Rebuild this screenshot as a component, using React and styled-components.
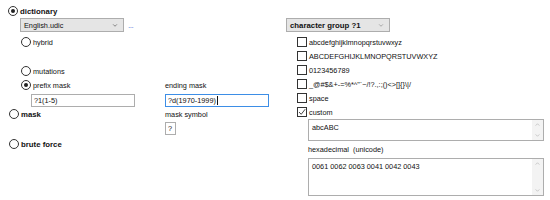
import React from 'react';
import styled, { createGlobalStyle } from 'styled-components';

const GlobalStyle = createGlobalStyle`
  html, body {
    margin: 0;
    padding: 0;
    background: #ffffff;
  }
  body {
    font-family: 'Liberation Sans', Arial, sans-serif;
    font-size: 7.3px;
    color: #111;
  }
`;

const Page = styled.div`
  display: flex;
  width: 550px;
  height: 200px;
  overflow: hidden;
`;

const LeftPane = styled.div`
  width: 279px;
  padding: 5px 0 0 8px;
  box-sizing: border-box;
  display: flex;
  flex-direction: column;
`;

const RightPane = styled.div`
  width: 271px;
  padding: 18px 0 0 7px;
  box-sizing: border-box;
  display: flex;
  flex-direction: column;
`;

const OptionRow = styled.label`
  display: flex;
  align-items: center;
  gap: 2px;
  height: 12px;
  margin-top: ${p => p.$top || 0}px;
  margin-left: ${p => p.$indent || 0}px;
  font-weight: ${p => (p.$bold ? 700 : 400)};
  font-size: ${p => (p.$bold ? '7.8px' : '7.3px')};
  white-space: nowrap;
`;

const RadioMark = styled.span`
  width: 10px;
  height: 10px;
  border: 1px solid #333;
  border-radius: 50%;
  box-sizing: border-box;
  display: flex;
  align-items: center;
  justify-content: center;
  background: #fff;
  flex-shrink: 0;

  &::after {
    content: '';
    width: 4px;
    height: 4px;
    border-radius: 50%;
    background: ${p => (p.$checked ? '#222' : 'transparent')};
  }
`;

const SelectRow = styled.div`
  display: flex;
  align-items: flex-end;
  gap: 4px;
  margin: ${p => p.$top || 0}px 0 0 ${p => p.$indent || 0}px;
`;

const Select = styled.div`
  width: 104px;
  height: 14px;
  box-sizing: border-box;
  border: 1px solid #adadad;
  background: #e5e5e5;
  display: flex;
  align-items: center;
  justify-content: space-between;
  padding: 0 5px 0 3px;
  font-weight: ${p => (p.$bold ? 700 : 400)};
  font-size: ${p => (p.$bold ? '7.8px' : '7.3px')};
`;

const MoreLink = styled.span`
  color: #4a6fd6;
  font-size: 8px;
  line-height: 8px;
  letter-spacing: -0.5px;
  margin-bottom: 2px;
`;

const MaskGrid = styled.div`
  display: grid;
  grid-template-columns: 156px 1fr;
  grid-template-rows: 12px 13px 12px 13px;
  row-gap: 2px;
  margin-top: 2px;

  & > :nth-child(3),
  & > :nth-child(4) {
    margin-top: 1px;
  }
`;

const FieldLabel = styled.div`
  display: flex;
  align-items: center;
  height: 12px;
  margin-left: ${p => p.$indent || 0}px;
`;

const Field = styled.div`
  width: ${p => p.$width}px;
  height: 13px;
  margin-left: ${p => p.$indent || 0}px;
  box-sizing: border-box;
  border: 1px solid ${p => (p.$focused ? '#3d8ee6' : '#adadad')};
  background: #fff;
  display: flex;
  align-items: center;
  padding-left: 2px;
  white-space: nowrap;
`;

const Caret = styled.span`
  width: 1px;
  height: 9px;
  background: #111;
  margin-left: 1px;
`;

const CheckList = styled.div`
  display: flex;
  flex-direction: column;
  margin: 3px 0 0 11px;
`;

const CheckRow = styled.label`
  display: flex;
  align-items: center;
  gap: 2px;
  height: 14px;
  white-space: nowrap;
`;

const CheckBox = styled.span`
  width: 10px;
  height: 10px;
  border: 1px solid #333;
  box-sizing: border-box;
  background: #fff;
  display: flex;
  align-items: center;
  justify-content: center;
  flex-shrink: 0;
`;

const CustomBlock = styled.div`
  display: flex;
  flex-direction: column;
  margin-left: 22px;
`;

const TextArea = styled.div`
  width: 236px;
  height: ${p => p.$height}px;
  box-sizing: border-box;
  border: 1px solid #adadad;
  background: #fff;
  display: flex;
  margin-top: ${p => p.$top || 0}px;
`;

const TextContent = styled.div`
  flex: 1;
  padding: 3px 0 0 3px;
`;

const ScrollStrip = styled.div`
  width: 11px;
  background: #f3f3f3;
  display: flex;
  flex-direction: column;
  justify-content: space-between;
  align-items: center;
  padding: 3px 0;
`;

const HexLabel = styled.div`
  height: 12px;
  display: flex;
  align-items: center;
  margin-top: 2px;
`;

const Chevron = ({ up, color = '#9a9a9a', w = 5 }) => (
  <svg width={w} height={3} viewBox="0 0 6 4" fill="none">
    <path d={up ? 'M0.5 3.5 L3 1 L5.5 3.5' : 'M0.5 0.5 L3 3 L5.5 0.5'} stroke={color} strokeWidth="0.9" />
  </svg>
);

const Tick = () => (
  <svg width="8" height="8" viewBox="0 0 8 8" fill="none">
    <path d="M1 4 L3.2 6.3 L7.2 1.2" stroke="#333" strokeWidth="0.9" />
  </svg>
);

const Radio = ({ checked, children, ...rest }) => (
  <OptionRow {...rest}>
    <RadioMark $checked={checked} />
    {children}
  </OptionRow>
);

const Check = ({ checked, children }) => (
  <CheckRow>
    <CheckBox>{checked && <Tick />}</CheckBox>
    {children}
  </CheckRow>
);

const Scroller = () => (
  <ScrollStrip>
    <Chevron up color="#b5b5b5" />
    <Chevron color="#b5b5b5" />
  </ScrollStrip>
);

const groups = [
  'abcdefghijklmnopqrstuvwxyz',
  'ABCDEFGHIJKLMNOPQRSTUVWXYZ',
  '0123456789',
  '_@#$&+-=%*^"`~/!?.,:;()<>[]{}\\|/',
  'space',
];

export default function App() {
  return (
    <Page>
      <GlobalStyle />
      <LeftPane>
        <Radio checked $bold>dictionary</Radio>
        <SelectRow $top={1} $indent={12}>
          <Select>
            English.udic
            <Chevron color="#555" w={6} />
          </Select>
          <MoreLink>...</MoreLink>
        </SelectRow>
        <Radio $indent={13} $top={4}>hybrid</Radio>
        <Radio $indent={13} $top={17}>mutations</Radio>
        <MaskGrid>
          <Radio checked $indent={13}>prefix mask</Radio>
          <FieldLabel $indent={1}>ending mask</FieldLabel>
          <Field $width={104} $indent={23}>?1(1-5)</Field>
          <Field $width={104} $indent={1} $focused>
            ?d(1970-1999)
            <Caret />
          </Field>
          <Radio $bold $indent={1}>mask</Radio>
          <FieldLabel $indent={1}>mask symbol</FieldLabel>
          <div />
          <Field $width={11} $indent={1}>?</Field>
        </MaskGrid>
        <Radio $bold $indent={1} $top={3}>brute force</Radio>
      </LeftPane>
      <RightPane>
        <Select $bold>
          character group ?1
          <Chevron color="#8a8a8a" w={6} />
        </Select>
        <CheckList>
          {groups.map(g => (
            <Check key={g}>{g}</Check>
          ))}
          <Check checked>custom</Check>
        </CheckList>
        <CustomBlock>
          <TextArea $height={22}>
            <TextContent>abcABC</TextContent>
            <Scroller />
          </TextArea>
          <HexLabel>hexadecimal&nbsp; (unicode)</HexLabel>
          <TextArea $height={38} $top={3}>
            <TextContent>0061 0062 0063 0041 0042 0043</TextContent>
            <Scroller />
          </TextArea>
        </CustomBlock>
      </RightPane>
    </Page>
  );
}
